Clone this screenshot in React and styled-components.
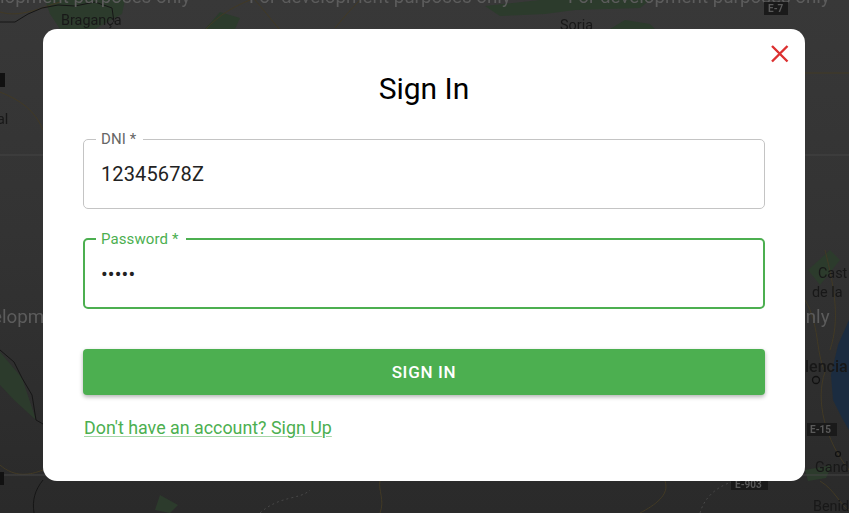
import React from "react";
import styled, { createGlobalStyle } from "styled-components";

const GlobalStyle = createGlobalStyle`
  html, body {
    margin: 0;
    height: 100%;
    overflow: hidden;
    font-family: Roboto, "Liberation Sans", sans-serif;
  }
  #root { height: 100%; }
`;

const Page = styled.div`
  position: relative;
  height: 100vh;
  background: linear-gradient(180deg, #383838 0%, #333333 45%, #2a2a2a 100%);
`;

const MapLayer = styled.svg`
  position: absolute;
  inset: 0;
  width: 100%;
  height: 100%;
  filter: blur(0.5px);
`;

const Overlay = styled.div`
  position: absolute;
  inset: 0;
  display: flex;
  align-items: flex-start;
  justify-content: center;
  padding: 29px 44px 0 43px;
  box-sizing: border-box;
`;

const Modal = styled.form`
  position: relative;
  box-sizing: border-box;
  width: 762px;
  height: 452px;
  padding: 40px 40px 0 40px;
  background: #fff;
  border-radius: 14px;
  display: flex;
  flex-direction: column;
`;

const CloseButton = styled.button`
  position: absolute;
  top: 14px;
  right: 14px;
  width: 22px;
  height: 22px;
  padding: 0;
  border: 0;
  background: none;
  display: flex;
`;

const Title = styled.h2`
  margin: 0 0 21px;
  font-size: 30px;
  line-height: 40px;
  font-weight: 400;
  text-align: center;
  color: #000;
`;

const Field = styled.fieldset`
  margin: 0 0 21px;
  height: 79px;
  box-sizing: border-box;
  min-width: 0;
  border-radius: 5px;
  border: ${(p) => (p.$focused ? "2px solid #4caf50" : "1px solid #c4c4c4")};
  padding: 0 16px 0 ${(p) => (p.$focused ? "11px" : "12px")};
`;

const Legend = styled.legend`
  padding: 0 ${(p) => (p.$focused ? "8px" : "7px")} 0 5px;
  margin-left: 0;
  font-size: 15px;
  line-height: 18px;
  letter-spacing: 0.1px;
  color: ${(p) => (p.$focused ? "#4caf50" : "#666")};
`;

const Input = styled.input`
  display: block;
  width: 100%;
  box-sizing: border-box;
  border: 0;
  outline: 0;
  padding: 0 0 0 5px;
  margin-top: 8px;
  height: 36px;
  background: none;
  font-family: inherit;
  font-size: 20px;
  letter-spacing: 0.12px;
  color: #222;
`;

const SubmitButton = styled.button`
  margin-top: 19px;
  height: 46px;
  border: 0;
  border-radius: 4px;
  background: #4caf50;
  color: #fff;
  font-family: inherit;
  font-size: 17px;
  font-weight: 500;
  letter-spacing: 0.7px;
  text-transform: uppercase;
  box-shadow: 0 2px 4px rgba(0, 0, 0, 0.3);
`;

const SignUpLink = styled.a`
  margin: 21px 0 0 1px;
  align-self: flex-start;
  font-size: 17.85px;
  line-height: 24px;
  color: #4caf50;
  text-decoration: underline;
  text-decoration-color: #a5d7a7;
  text-decoration-thickness: 1px;
  text-underline-offset: 2px;
`;

const Watermark = styled.text`
  font-family: Roboto, sans-serif;
  font-size: 18.8px;
  fill: #5c5c5c;
`;

const Place = styled.text`
  font-family: Roboto, sans-serif;
  font-size: ${(p) => (p.$strong ? "16px" : "14.4px")};
  font-weight: ${(p) => (p.$strong ? 500 : 400)};
  fill: #181818;
`;

const RoadTag = styled.text`
  font-family: Roboto, sans-serif;
  font-size: 10px;
  font-weight: 700;
  fill: #5a5a5a;
`;

function BackgroundMap() {
  return (
    <MapLayer viewBox="0 0 849 513">
      {/* green zones */}
      <g fill="#2c3b2c">
        <path d="M45 0 L125 0 L122 14 L95 29 L60 29 L50 14Z" />
        <path d="M205 29 L220 12 L240 18 L235 29Z" />
        <path d="M485 6 L540 0 L650 0 L640 8 L575 10 L545 14 L500 16Z" />
        <path d="M610 29 L625 20 L650 24 L655 29Z" />
        <path d="M0 352 L22 378 L36 420 L14 400 L0 385Z" />
        <path d="M805 470 L832 465 L826 478 L808 481Z" />
        <path d="M808 270 L830 250 L840 260 L820 285Z" />
        <path d="M160 495 L178 505 L170 513 L155 510Z" />
      </g>
      {/* sea */}
      <path d="M849 320 L838 345 L831 375 L833 400 L842 418 L849 430Z" fill="#1b2c40" />
      {/* roads */}
      <g fill="none" stroke="#423a25" strokeWidth="1">
        <path d="M0 12 C20 18 40 8 60 2" />
        <path d="M205 30 C220 14 235 6 250 0" />
        <path d="M280 30 C270 18 262 8 255 0" />
        <path d="M335 28 C345 16 352 8 360 0" />
        <path d="M805 73 L849 73" />
        <path d="M0 92 C20 100 35 110 43 130" />
        <path d="M0 465 C15 478 30 475 43 470" />
        <path d="M805 300 C820 325 815 350 825 372 C815 400 825 440 849 470" />
        <path d="M825 250 C835 290 840 320 830 350" />
        <path d="M380 513 C385 500 378 490 380 481" />
        <path d="M640 513 C655 505 670 495 665 481" />
        <path d="M820 481 C835 490 840 505 849 510" />
      </g>
      {/* borders */}
      <g fill="none" stroke="#161616" strokeWidth="1">
        <path d="M0 22 L15 22 L28 14 L42 8 L58 5 L75 6 L95 2 L112 8 L114 22" />
        <path d="M0 350 L14 362 L22 378 L32 395 L36 420 L43 424" />
        <path d="M43 480 C35 490 32 500 34 513" />
      </g>
      <path d="M260 513 C280 495 300 500 310 490" fill="none" stroke="#484848" strokeDasharray="2 3" />
      <path d="M700 513 C705 495 720 485 735 481" fill="none" stroke="#484848" strokeDasharray="2 3" />
      {/* tile seams */}
      <path d="M0 155 L849 155 M0 475 L849 475" stroke="#444" strokeWidth="1" />
      <Watermark x="0" y="3">lopment purposes only</Watermark>
      <Watermark x="249" y="3">For development purposes only</Watermark>
      <Watermark x="568" y="3">For development purposes only</Watermark>
      <Watermark x="-8" y="323">elopm</Watermark>
      <Watermark x="795" y="323">only</Watermark>
      <Place x="61" y="25">Bragança</Place>
      <Place x="560" y="30">Soria</Place>
      <Place x="-3" y="124">al</Place>
      <Place x="818" y="278">Cast</Place>
      <Place x="812" y="297">de la</Place>
      <Place x="805" y="372" $strong>lencia</Place>
      <Place x="815" y="472">Gand</Place>
      <Place x="813" y="511">Benid</Place>
      <circle cx="816" cy="380" r="3.5" fill="none" stroke="#111" strokeWidth="1.3" />
      <circle cx="838" cy="454" r="2.5" fill="none" stroke="#111" strokeWidth="1.2" />
      <rect x="764" y="2" width="24" height="13" fill="#1a1a1a" />
      <RoadTag x="768" y="12">E-7</RoadTag>
      <rect x="807" y="423" width="30" height="13" fill="#1a1a1a" />
      <RoadTag x="810" y="433">E-15</RoadTag>
      <rect x="731" y="481" width="37" height="9" fill="#1a1a1a" />
      <RoadTag x="735" y="488">E-903</RoadTag>
      <rect x="0" y="73" width="5" height="14" fill="#111" />
      <rect x="0" y="472" width="4" height="13" fill="#111" />
    </MapLayer>
  );
}

export default function App() {
  return (
    <Page>
      <GlobalStyle />
      <BackgroundMap />
      <Overlay>
        <Modal onSubmit={(e) => e.preventDefault()}>
          <CloseButton type="button" aria-label="Close">
            <svg viewBox="0 0 22 22" width="22" height="22">
              <path d="M3 3 L18.5 18.5 M18.5 3 L3 18.5" stroke="#dc3030" strokeWidth="2.4" fill="none" />
            </svg>
          </CloseButton>
          <Title>Sign In</Title>
          <Field>
            <Legend>DNI *</Legend>
            <Input readOnly value="12345678Z" />
          </Field>
          <Field $focused>
            <Legend $focused>Password *</Legend>
            <Input readOnly type="password" value="12345" />
          </Field>
          <SubmitButton type="submit">Sign In</SubmitButton>
          <SignUpLink href="#">Don't have an account? Sign Up</SignUpLink>
        </Modal>
      </Overlay>
    </Page>
  );
}
